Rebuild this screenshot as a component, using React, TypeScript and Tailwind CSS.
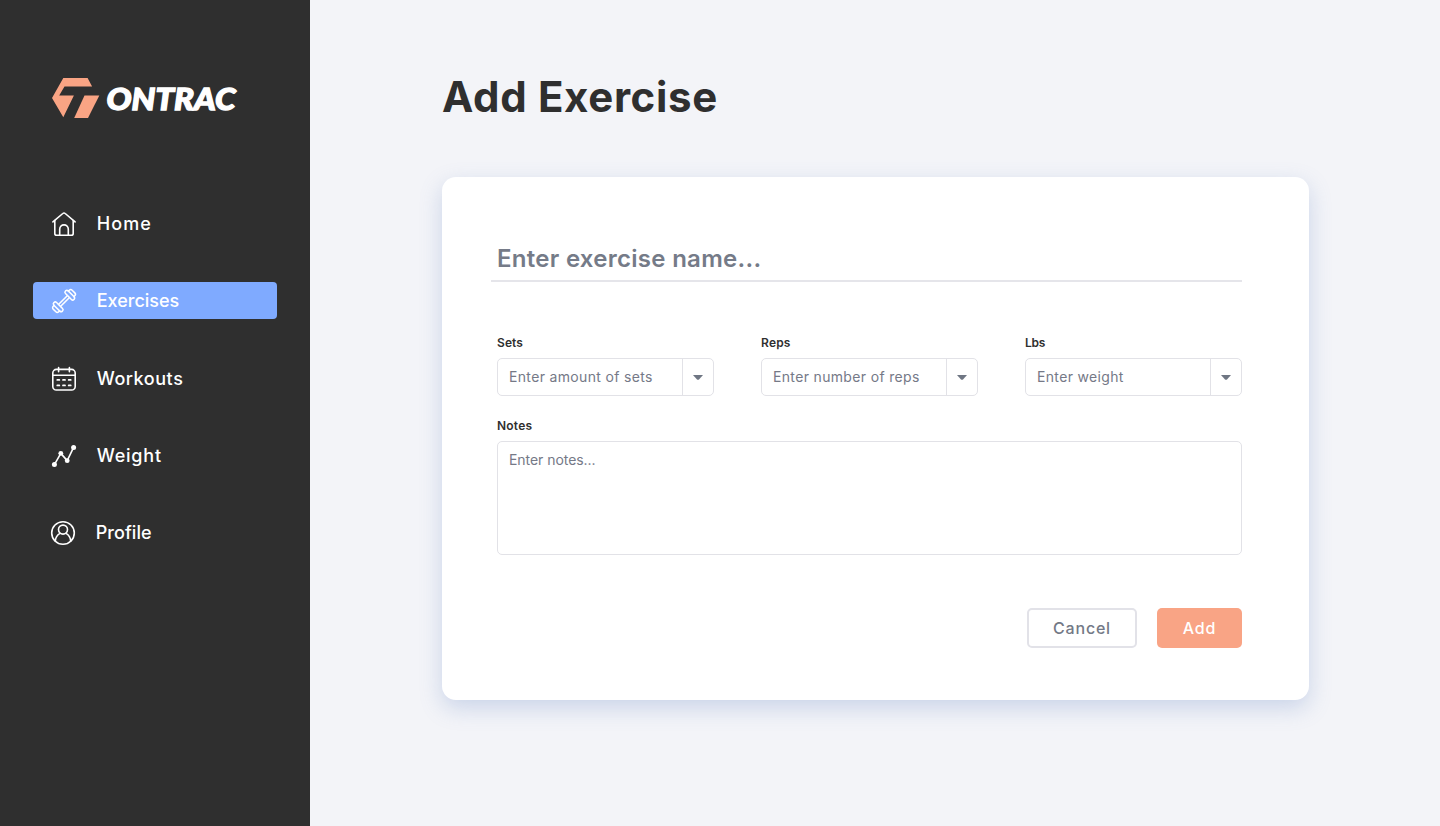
import type { ReactNode } from "react";
import clsx from "clsx";

function Icon({ children }: { children: ReactNode }) {
  return (
    <svg
      className="size-6 shrink-0 overflow-visible"
      viewBox="0 0 24 24"
      fill="none"
      stroke="currentColor"
      strokeWidth="1.6"
      strokeLinecap="round"
      strokeLinejoin="round"
    >
      {children}
    </svg>
  );
}

const HomeIcon = () => (
  <Icon>
    <path d="M.9 9.9 10.8 1.5a1.8 1.8 0 0 1 2.4 0l9.9 8.4" />
    <path d="M2.8 8.6v12.8a1.9 1.9 0 0 0 1.9 1.9h14.6a1.9 1.9 0 0 0 1.9-1.9V8.6" />
    <path d="M7.7 23v-5.8a4.3 4.3 0 0 1 8.6 0V23" />
  </Icon>
);

const DumbbellIcon = () => (
  <Icon>
    <g transform="translate(12 12) rotate(-45)" strokeWidth="1.5">
      <path d="M-6.4-1.4H6.4M-6.4 1.4H6.4" />
      <rect x="-10.1" y="-6" width="3.8" height="12" rx="1.8" />
      <rect x="6.3" y="-6" width="3.8" height="12" rx="1.8" />
      <path d="M-10.1-3.9h-1.3a2 2 0 0 0-2 2v3.8a2 2 0 0 0 2 2h1.3M10.1-3.9h1.3a2 2 0 0 1 2 2v3.8a2 2 0 0 1-2 2h-1.3" />
    </g>
  </Icon>
);

const CalendarIcon = () => (
  <Icon>
    <g transform="translate(0 1)">
      <rect x=".8" y="2.4" width="22.4" height="20.6" rx="3.6" />
      <path d="M.8 8.3h22.4M6.6.6v4.2M17.4.6v4.2" />
      <path d="M5.3 12.9h2M11 12.9h2M16.7 12.9h2M5.3 18.4h2M11 18.4h2M16.7 18.4h2" strokeWidth="1.8" />
    </g>
  </Icon>
);

const ChartIcon = () => (
  <Icon>
    <g transform="translate(0 1.2)">
      <path d="m2.4 20.4 6.4-11.2 6.4 7.2 6.3-12.9" />
      <g fill="currentColor" stroke="none">
        <circle cx="2.4" cy="20.3" r="2.5" />
        <circle cx="8.8" cy="9.1" r="2.4" />
        <circle cx="15.2" cy="16.5" r="2.4" />
        <circle cx="21.6" cy="3.4" r="2.5" />
      </g>
    </g>
  </Icon>
);

const ProfileIcon = () => (
  <Icon>
    <circle cx="12" cy="12" r="11.3" />
    <circle cx="12" cy="8.6" r="4.5" />
    <path d="M4.3 20.2c.2-3.5 2-6.3 4.7-7.8M19.7 20.2c-.2-3.5-2-6.3-4.7-7.8" />
  </Icon>
);

function Logo() {
  return (
    <svg className="block h-10 w-[186px] overflow-visible" viewBox="0 0 186 40">
      <g fill="#f9a484">
        <path d="M11.3 0h24.3l4.5 8.6H12.5L7.2 17.4h14.7L11.3 39.3 0 20z" />
        <path d="M32.5 17.4h14.8L36 39.9H22.2z" />
      </g>
      <text
        x="54.5"
        y="31.6"
        textLength="129"
        lengthAdjust="spacingAndGlyphs"
        fill="#fff"
        stroke="#fff"
        strokeWidth="1.3"
        className="font-['Lato',sans-serif] text-[31px] font-black italic"
      >
        ONTRAC
      </text>
    </svg>
  );
}

const nav = [
  { label: "Home", icon: <HomeIcon />, spacing: "tracking-[1.1px]" },
  { label: "Exercises", icon: <DumbbellIcon />, spacing: "tracking-normal" },
  { label: "Workouts", icon: <CalendarIcon />, spacing: "tracking-[0.55px]" },
  { label: "Weight", icon: <ChartIcon />, spacing: "tracking-[0.8px]" },
  { label: "Profile", icon: <ProfileIcon />, spacing: "tracking-[0.05px]" },
];

function Sidebar() {
  return (
    <aside className="w-[310px] shrink-0 bg-[#2f2f2f] px-[33px] pt-[78px] text-white">
      <div className="pl-[19px]">
        <Logo />
      </div>
      <nav className="mt-[87px] flex flex-col gap-[40.25px]">
        {nav.map((n) => (
          <a
            key={n.label}
            className={clsx(
              "flex h-[37px] items-center gap-[20.7px] rounded pr-4 text-[18px] font-medium",
              n.label === "Profile" ? "pl-[18px]" : "pl-[19px]",
              n.label === "Exercises" && "bg-[#7faaff]",
            )}
          >
            {n.icon}
            <span className={n.spacing}>{n.label}</span>
          </a>
        ))}
      </nav>
    </aside>
  );
}

function SelectField({ label, placeholder, spacing }: { label: string; placeholder: string; spacing: string }) {
  return (
    <div>
      <div className={clsx("h-4 text-xs font-semibold text-[#2f2f2f]", spacing)}>{label}</div>
      <div className="mt-[7px] flex h-[38px] rounded-[5px] border border-[#e2e2e7]">
        <div className="flex flex-1 items-center pl-[11px] text-sm tracking-[0.34px] text-[#757987]">{placeholder}</div>
        <div className="flex w-[31px] items-center justify-center border-l border-[#e2e2e7]">
          <svg className="h-[5px] w-[10px]" viewBox="0 0 10 5">
            <path d="M0 0h10L6 4.4a1.5 1.5 0 0 1-2 0z" fill="#6f7683" />
          </svg>
        </div>
      </div>
    </div>
  );
}

export default function App() {
  return (
    <div className="flex h-[826px] w-[1440px] overflow-hidden bg-[#f3f4f8] font-['Inter',sans-serif]">
      <Sidebar />
      <main className="pl-[132px] pt-[73px]">
        <h1 className="h-12 text-[42px] leading-[48px] font-bold tracking-[0.65px] text-[#2f2f2f]">
          Add Exercise
        </h1>
        <section className="mt-14 h-[523px] w-[867px] rounded-[14px] bg-white pt-[62px] pr-[67px] pl-[55px] shadow-[0_8px_22px_rgba(110,140,200,0.3)]">
          <div className="-ml-[6px] flex h-[43px] border-b-2 border-[#e5e5ea] pl-[6px]">
            <span className="text-[24px] leading-[39px] font-semibold tracking-[0.28px] text-[#757b88]">
              Enter exercise name...
            </span>
          </div>
          <div className="mt-[53px] grid grid-cols-3 gap-[47px]">
            <SelectField label="Sets" placeholder="Enter amount of sets" spacing="tracking-[0.1px]" />
            <SelectField label="Reps" placeholder="Enter number of reps" spacing="tracking-[0.2px]" />
            <SelectField label="Lbs" placeholder="Enter weight" spacing="tracking-[-0.2px]" />
          </div>
          <div className="mt-[22px] h-4 text-xs font-semibold tracking-[0.2px] text-[#2f2f2f]">Notes</div>
          <div className="mt-[7px] h-[114px] rounded-[5px] border border-[#e2e2e7] px-[11px] pt-2 text-sm tracking-[-0.05px] text-[#757987]">
            Enter notes...
          </div>
          <div className="mt-[53px] flex justify-end gap-5 font-medium tracking-[0.8px]">
            <button className="h-10 w-[110px] rounded-[5px] border-2 border-[#e2e2e8] text-[#737986]">Cancel</button>
            <button className="h-10 w-[85px] rounded-[5px] bg-[#f9a485] text-white">Add</button>
          </div>
        </section>
      </main>
    </div>
  );
}
